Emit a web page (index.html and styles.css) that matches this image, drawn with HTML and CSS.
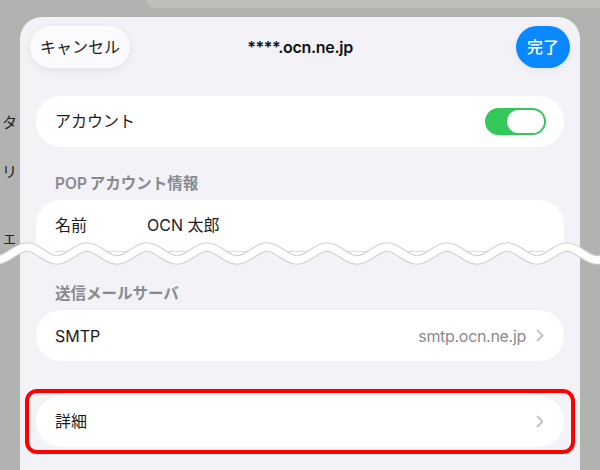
FILE: index.html
```html
<!DOCTYPE html>
<html lang="ja">
<head>
<meta charset="utf-8">
<title>****.ocn.ne.jp</title>
<link rel="stylesheet" href="styles.css">
</head>
<body>
<div class="screen">
  <div class="top">
    <div class="strip"></div>
    <div class="row-wrap">
      <div class="gutter gutter-left">
        <div class="behind t1">タ</div>
        <div class="behind t2">リ</div>
        <div class="behind t3">ェ</div>
      </div>
      <div class="sheet sheet-top">
        <div class="header">
          <div class="btn-cancel">キャンセル</div>
          <div class="title">****.ocn.ne.jp</div>
          <div class="btn-done">完了</div>
        </div>
        <div class="card card-account">
          <div class="row row-ja">
            <span class="label-grow">アカウント</span>
            <span class="toggle"><span class="knob"></span></span>
          </div>
        </div>
        <div class="section-title sec-pop">POP アカウント情報</div>
        <div class="card card-cut">
          <div class="row row-ja">
            <span class="label">名前</span>
            <span>OCN 太郎</span>
          </div>
          <div class="sep"></div>
        </div>
      </div>
      <div class="gutter"></div>
    </div>
  </div>

  <div class="bottom">
    <div class="gutter"></div>
    <div class="sheet sheet-bottom">
      <div class="section-title">送信メールサーバ</div>
      <div class="card">
        <div class="row">
          <span class="label-grow">SMTP</span>
          <span class="value">smtp.ocn.ne.jp</span>
          <svg class="chev" width="8" height="13" viewBox="0 0 8 13"><path d="M1.5 1.5 L6.5 6.5 L1.5 11.5" fill="none" stroke="#c2c2c6" stroke-width="1.8" stroke-linecap="round" stroke-linejoin="round"/></svg>
        </div>
      </div>
      <div class="highlight">
        <div class="card card-in">
          <div class="row row-ja">
            <span class="label-grow">詳細</span>
            <svg class="chev" width="8" height="13" viewBox="0 0 8 13"><path d="M1.5 1.5 L6.5 6.5 L1.5 11.5" fill="none" stroke="#c2c2c6" stroke-width="1.8" stroke-linecap="round" stroke-linejoin="round"/></svg>
          </div>
        </div>
      </div>
    </div>
    <div class="gutter"></div>
  </div>

  <svg class="wave" width="600" height="40" viewBox="0 0 600 40">
    <path d="M-33 12 C-22.1 12 -13.9 25 -3 25 S16.1 12 27 12 S46.1 25 57 25 S76.1 12 87 12 S106.1 25 117 25 S136.1 12 147 12 S166.1 25 177 25 S196.1 12 207 12 S226.1 25 237 25 S256.1 12 267 12 S286.1 25 297 25 S316.1 12 327 12 S346.1 25 357 25 S376.1 12 387 12 S406.1 25 417 25 S436.1 12 447 12 S466.1 25 477 25 S496.1 12 507 12 S526.1 25 537 25 S556.1 12 567 12 S586.1 25 597 25 S616.1 12 627 12" fill="none" stroke="#cfcfd1" stroke-width="9.5"/>
    <path d="M-33 12 C-22.1 12 -13.9 25 -3 25 S16.1 12 27 12 S46.1 25 57 25 S76.1 12 87 12 S106.1 25 117 25 S136.1 12 147 12 S166.1 25 177 25 S196.1 12 207 12 S226.1 25 237 25 S256.1 12 267 12 S286.1 25 297 25 S316.1 12 327 12 S346.1 25 357 25 S376.1 12 387 12 S406.1 25 417 25 S436.1 12 447 12 S466.1 25 477 25 S496.1 12 507 12 S526.1 25 537 25 S556.1 12 567 12 S586.1 25 597 25 S616.1 12 627 12" fill="none" stroke="#ffffff" stroke-width="7.5"/>
  </svg>
</div>
</body>
</html>
```

FILE: styles.css
```css
html, body {
  margin: 0;
  padding: 0;
}

body {
  font-family: Inter, "Noto Sans CJK JP", sans-serif;
  color: #1c1c1e;
}

.screen {
  position: relative;
  width: 600px;
  height: 470px;
  overflow: hidden;
  background: #b1b3b0;
}

.top {
  position: relative;
  z-index: 1;
  clip-path: path('M-33 253.5 C-22.1 247 -13.9 260 -3 260 S16.1 247 27 247 S46.1 260 57 260 S76.1 247 87 247 S106.1 260 117 260 S136.1 247 147 247 S166.1 260 177 260 S196.1 247 207 247 S226.1 260 237 260 S256.1 247 267 247 S286.1 260 297 260 S316.1 247 327 247 S346.1 260 357 260 S376.1 247 387 247 S406.1 260 417 260 S436.1 247 447 247 S466.1 260 477 260 S496.1 247 507 247 S526.1 260 537 260 S556.1 247 567 247 S586.1 260 597 260 S616.1 247 627 247 L627 0 L-33 0 Z');
}

.strip {
  height: 8px;
  margin-left: 147px;
  background: #bdbfbb;
  border-bottom-left-radius: 9px;
}

.row-wrap,
.bottom {
  display: flex;
}

.row-wrap {
  margin-top: 9px;
}

.bottom {
  margin-top: -35px;
  height: 235px;
}

.gutter {
  width: 20px;
  flex: none;
  overflow: hidden;
}

.gutter-left {
  display: flex;
  flex-direction: column;
  align-items: flex-end;
}

.behind {
  font-size: 15px;
  line-height: 20px;
  white-space: nowrap;
  padding-right: 3px;
  color: #222;
}

.t1 { margin-top: 96px; }
.t2 { margin-top: 29px; }
.t3 { margin-top: 46px; }

.sheet {
  width: 560px;
  flex: none;
  background: #f2f2f7;
}

.sheet-top {
  border-radius: 22px 22px 0 0;
  padding-top: 9px;
}

.sheet-bottom {
  padding-top: 49px;
}

.header {
  display: grid;
  grid-template-columns: 1fr auto 1fr;
  align-items: center;
  padding: 0 10px;
}

.btn-cancel {
  justify-self: start;
  width: 100px;
  height: 42px;
  box-sizing: border-box;
  padding-bottom: 2px;
  border-radius: 21px;
  background: #fbfbfd;
  box-shadow: 0 2px 10px rgba(0, 0, 0, 0.07);
  display: flex;
  align-items: center;
  justify-content: center;
  font-size: 16px;
}

.title {
  font-size: 16px;
  font-weight: 600;
  letter-spacing: -0.3px;
  color: #111;
}

.btn-done {
  justify-self: end;
  width: 54px;
  height: 42px;
  box-sizing: border-box;
  padding-bottom: 2px;
  border-radius: 21px;
  background: #0a88ff;
  color: #fff;
  display: flex;
  align-items: center;
  justify-content: center;
  font-size: 16px;
  font-weight: 500;
  box-shadow: 0 2px 10px rgba(0, 0, 0, 0.06);
}

.card {
  margin: 0 16px;
  background: #fff;
  border-radius: 25px;
}

.card-account {
  margin-top: 28px;
}

.card-cut {
  height: 70px;
  border-radius: 25px 25px 0 0;
}

.row {
  height: 51px;
  box-sizing: border-box;
  display: flex;
  align-items: center;
  padding: 0 19px;
  font-size: 16px;
}

.row-ja {
  padding-bottom: 3px;
}

.label-grow {
  flex: 1;
}

.label {
  width: 92px;
  flex: none;
}

.sep {
  height: 1px;
  margin: 0 19px;
  background: #dcdce0;
}

.section-title {
  padding-left: 35px;
  margin-bottom: 6px;
  font-size: 15.5px;
  line-height: 20px;
  font-weight: 600;
  color: #8a8a8e;
  word-spacing: -1px;
}

.sec-pop {
  margin-top: 27px;
}

.toggle {
  position: relative;
  width: 61px;
  height: 27px;
  border-radius: 14px;
  background: #34c759;
  margin-right: -1px;
  margin-top: 3px;
}

.knob {
  position: absolute;
  top: 2px;
  right: 2px;
  width: 37px;
  height: 23px;
  border-radius: 12px;
  background: #fff;
}

.value {
  color: #8a8a8e;
  margin-right: 10px;
  letter-spacing: -0.3px;
}

.chev {
  display: block;
  flex: none;
  margin-right: 1px;
}

.row-ja .chev {
  margin-top: 3px;
}

.highlight {
  margin: 28px 5px 0;
  border: 4px solid #ff0000;
  border-radius: 12px;
  padding: 3px 7px;
}

.card-in {
  margin: 0;
}

.wave {
  position: absolute;
  left: 0;
  top: 235px;
  z-index: 2;
  display: block;
}
```
